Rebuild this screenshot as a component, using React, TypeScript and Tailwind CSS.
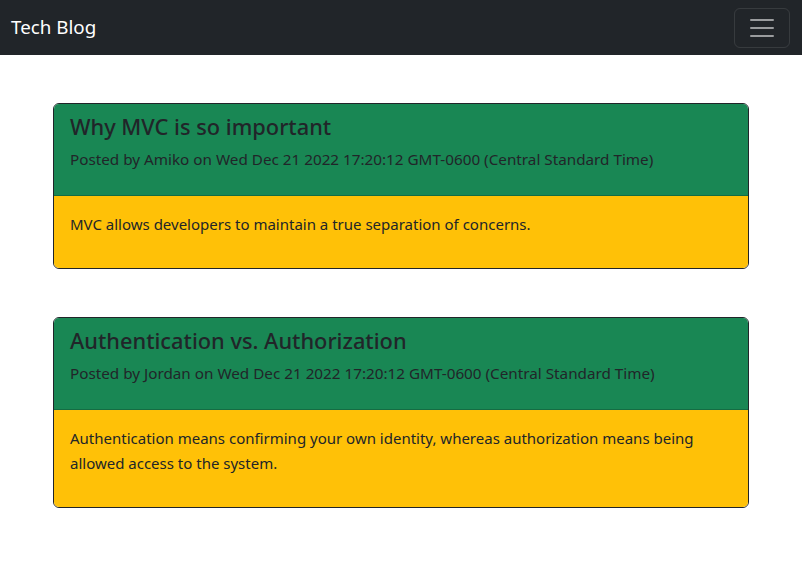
const POSTS = [
  {
    id: 1,
    title: "Why MVC is so important",
    author: "Amiko",
    date: "Wed Dec 21 2022 17:20:12 GMT-0600 (Central Standard Time)",
    body: "MVC allows developers to maintain a true separation of concerns.",
  },
  {
    id: 2,
    title: "Authentication vs. Authorization",
    author: "Jordan",
    date: "Wed Dec 21 2022 17:20:12 GMT-0600 (Central Standard Time)",
    body: "Authentication means confirming your own identity, whereas authorization means being allowed access to the system.",
  },
];

export default function App() {
  return (
    <div
      className="min-h-screen bg-white text-[#212529]"
      style={{ fontFamily: '"Noto Sans", "Open Sans", sans-serif' }}
    >
      {/* Navbar */}
      <nav className="h-[55px] bg-[#212529] flex items-center justify-between pl-[11px] pr-[12px]">
        <span className="text-[18.8px] text-white leading-none">Tech Blog</span>
        <button className="w-[56px] h-[40px] border border-white/10 rounded-[6px] flex items-center justify-center">
          <svg width="30" height="30" viewBox="0 0 30 30">
            <path
              d="M4 7h22M4 15h22M4 23h22"
              stroke="rgba(255,255,255,0.55)"
              strokeWidth="2"
              strokeLinecap="round"
            />
          </svg>
        </button>
      </nav>

      {/* Posts */}
      <main className="w-[696px] mx-auto pt-[48px] flex flex-col gap-[48px]">
        {POSTS.map((post) => (
          <div
            key={post.id}
            className="border border-[#212529] rounded-[6px] overflow-hidden"
          >
            <div className="bg-[#198754] px-4 pt-[9px] pb-2 border-b border-black/20">
              <h4 className="text-[21.8px] leading-[28.8px] mb-[5px] font-medium">
                {post.title}
              </h4>
              <p className="text-[15.25px] leading-6 mb-[16px]">
                Posted by {post.author} on {post.date}
              </p>
            </div>
            <div className="bg-[#ffc107] px-4 pt-4 pb-[15px]">
              <p className="text-[15px] leading-[25px] mb-4">{post.body}</p>
            </div>
          </div>
        ))}
      </main>
    </div>
  );
}
